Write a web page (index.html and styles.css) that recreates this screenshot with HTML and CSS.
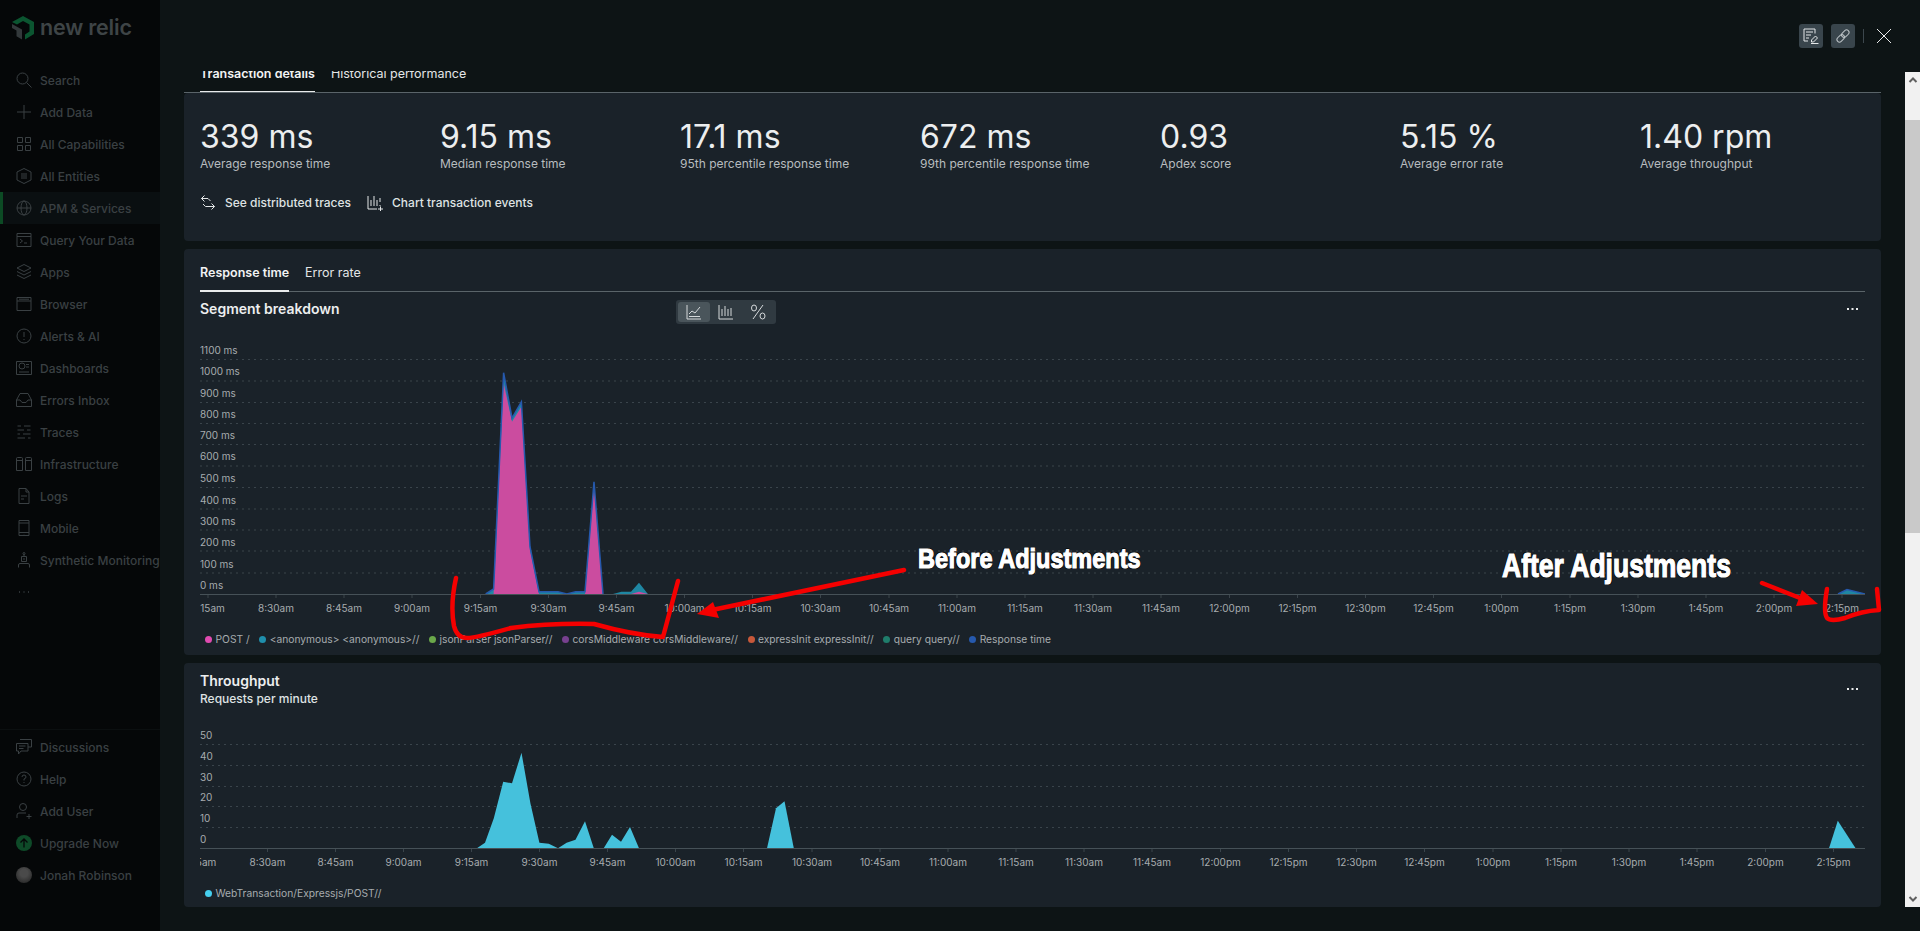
FILE: index.html
```html
<!DOCTYPE html>
<html lang="en">
<head>
    <meta charset="UTF-8">
    <meta name="viewport" content="width=device-width, initial-scale=1.0">
    <title>Transaction details - New Relic</title>
    <link rel="stylesheet" href="styles.css">
</head>
<body>
    <nav class="sidebar">
        <div class="logo">
            <svg class="logo-mark" width="22" height="24" viewBox="0 0 22 24">
                <path fill="#0b5530" d="M11 0 22 6V18L13 23.500V18.500L17.500 15.500V8.500L11 5 5 8.500 0 6Z"/>
                <path fill="#33393b" d="M0 8 10 13.500V23.500L4.500 20.200V14.500L0 12Z"/>
            </svg>
            <span class="logo-text">new relic</span>
        </div>
        <ul class="nav-list">
            <li class="nav-item"><svg class="nav-icon" viewBox="0 0 16 16"><circle cx="6.500" cy="6.500" r="5.500"/><path d="M10.500 10.500 15.500 15.500"/></svg>Search</li>
            <li class="nav-item"><svg class="nav-icon" viewBox="0 0 16 16"><path d="M8 1V15M1 8H15"/></svg>Add Data</li>
            <li class="nav-item"><svg class="nav-icon" viewBox="0 0 16 16"><path d="M1.500 1.500H6.500V6.500H1.500ZM9.500 1.500H14.500V6.500H9.500ZM1.500 9.500H6.500V14.500H1.500ZM9.500 9.500H14.500V14.500H9.500Z"/></svg>All Capabilities</li>
            <li class="nav-item"><svg class="nav-icon" viewBox="0 0 16 16"><path d="M8 .5 15 4V12L8 15.500 1 12V4ZM5 6H11M5 8H11M5 10H11"/></svg>All Entities</li>
            <li class="nav-item nav-item-active"><svg class="nav-icon" viewBox="0 0 16 16"><circle cx="8" cy="8" r="7"/><ellipse cx="8" cy="8" rx="3" ry="7"/><path d="M1 8H15"/></svg>APM &amp; Services</li>
            <li class="nav-item"><svg class="nav-icon" viewBox="0 0 16 16"><path d="M1 1.500H15V14.500H1ZM1 4.500H15M4 7 6.500 9 4 11M8 11H11"/></svg>Query Your Data</li>
            <li class="nav-item"><svg class="nav-icon" viewBox="0 0 16 16"><path d="M8 .5 15 4 8 7.500 1 4ZM1 7.500 8 11 15 7.500M1 11 8 14.500 15 11"/></svg>Apps</li>
            <li class="nav-item"><svg class="nav-icon" viewBox="0 0 16 16"><path d="M1 1.500H15V14.500H1ZM1 5H15M3 3.200H13" /></svg>Browser</li>
            <li class="nav-item"><svg class="nav-icon" viewBox="0 0 16 16"><circle cx="8" cy="8" r="7"/><path d="M8 4V9M8 11V12"/></svg>Alerts &amp; AI</li>
            <li class="nav-item"><svg class="nav-icon" viewBox="0 0 16 16"><path d="M.5 1.500H15.500V14.500H.5ZM10 4.500H13M10 7H13M3 12H13"/><circle cx="6" cy="6" r="3"/></svg>Dashboards</li>
            <li class="nav-item"><svg class="nav-icon" viewBox="0 0 16 16"><path d="M4 1.500H12L15.500 8V14.500H.5V8ZM.5 8H4L6 10.500H10L12 8H15.500"/></svg>Errors Inbox</li>
            <li class="nav-item"><svg class="nav-icon" viewBox="0 0 16 16"><path d="M1.500 2H5M8 2H14.500M1.500 6H8M11 6H14.500M1.500 10H4M7 10H14.500M1.500 14H9M12 14H14.500"/></svg>Traces</li>
            <li class="nav-item"><svg class="nav-icon" viewBox="0 0 16 16"><path d="M.5 2.500Q.5 1.500 1.500 1.500H5.500Q6.500 1.500 6.500 2.500V14.500H.5ZM9.500 2.500Q9.500 1.500 10.500 1.500H14.500Q15.500 1.500 15.500 2.500V14.500H9.500ZM.5 4.500H6.500M9.500 4.500H15.500"/></svg>Infrastructure</li>
            <li class="nav-item"><svg class="nav-icon" viewBox="0 0 16 16"><path d="M3 .5H10L13 4V15.500H3ZM10 .5V4H13M5 8H11M5 11H8"/></svg>Logs</li>
            <li class="nav-item"><svg class="nav-icon" viewBox="0 0 16 16"><path d="M3 .5H13V15.500H3ZM3 3H13M3 12.500H13M8 14V14.300"/></svg>Mobile</li>
            <li class="nav-item"><svg class="nav-icon" viewBox="0 0 16 16"><path d="M5.500 4.500H10.500V9.500H5.500ZM8 4.500V2M2.500 15.500V13Q2.500 11.500 4 11.500H12Q13.500 11.500 13.500 13V15.500M7 7H9"/><circle cx="8" cy="1.500" r="1"/></svg>Synthetic Monitoring</li>
            <li class="nav-item"><svg class="nav-icon" viewBox="0 0 16 16"><path class="nav-dots" d="M3 8H4M7.500 8H8.500M12 8H13"/></svg></li>
        </ul>
        <ul class="nav-list nav-list-bottom">
            <li class="nav-item"><svg class="nav-icon" viewBox="0 0 16 16"><path d="M.5 4.500H12V12H5L2.500 15V12H.5ZM4 .5H15.500V8H12M3 7H9.500M3 9.500H7.500"/></svg>Discussions</li>
            <li class="nav-item"><svg class="nav-icon" viewBox="0 0 16 16"><circle cx="8" cy="8" r="7"/><path d="M6 6Q6 4 8 4 10 4 10 6 10 7.500 8 8V9.500M8 11V12"/></svg>Help</li>
            <li class="nav-item"><svg class="nav-icon" viewBox="0 0 16 16"><circle cx="7" cy="4" r="3.500"/><path d="M1 15V12Q1 10 3 10H10M10.500 13.500H15.500M13 11V16"/></svg>Add User</li>
            <li class="nav-item"><span class="upgrade-badge"><svg width="10" height="10" viewBox="0 0 10 10"><path d="M5 9.500V1M1.500 4.500 5 1 8.500 4.500"/></svg></span>Upgrade Now</li>
            <li class="nav-item"><span class="avatar"></span>Jonah Robinson</li>
        </ul>
    </nav>

    <main class="main">
        <header class="topbar">
            <button class="icon-btn" aria-label="Notes">
                <svg width="16" height="16" viewBox="0 0 16 16"><path d="M12 5.500V1H1V13H5M3 4H10M3 7H8M3 10H6M8 15.500H15.500M8.500 12 12.500 8 14.500 10 10.500 14H8.500Z"/></svg>
            </button>
            <button class="icon-btn icon-btn-dim" aria-label="Copy link">
                <svg width="16" height="16" viewBox="0 0 16 16"><g transform="rotate(-45 8 8)"><rect x="0.500" y="5.500" width="8.500" height="5" rx="2.500"/><rect x="7" y="5.500" width="8.500" height="5" rx="2.500"/></g></svg>
            </button>
            <span class="topbar-divider"></span>
            <button class="close-btn" aria-label="Close">
                <svg width="16" height="16" viewBox="0 0 16 16"><path d="M1 1 15 15M15 1 1 15"/></svg>
            </button>
        </header>

        <div class="scroll-row">
            <div class="content">
                <div class="tabs tabs-clipped">
                    <span class="tab tab-active">Transaction details</span>
                    <span class="tab">Historical performance</span>
                </div>

                <section class="panel panel-stats">
                    <div class="stats">
                        <div><div class="stat-value">339 ms</div><div class="stat-label">Average response time</div></div>
                        <div><div class="stat-value">9.15 ms</div><div class="stat-label">Median response time</div></div>
                        <div><div class="stat-value">17.1 ms</div><div class="stat-label">95th percentile response time</div></div>
                        <div><div class="stat-value">672 ms</div><div class="stat-label">99th percentile response time</div></div>
                        <div><div class="stat-value">0.93</div><div class="stat-label">Apdex score</div></div>
                        <div><div class="stat-value">5.15 %</div><div class="stat-label">Average error rate</div></div>
                        <div><div class="stat-value">1.40 rpm</div><div class="stat-label">Average throughput</div></div>
                    </div>
                    <div class="actions">
                        <a class="action">
                            <svg width="16" height="16" viewBox="0 0 16 16"><path d="M4.500 .5 1.500 3.500 4.500 6.500M1.500 3.500H8L10.500 6M3 9 5.500 11.500H14.500M11.500 8.500 14.500 11.500 11.500 14.500"/></svg>
                            See distributed traces
                        </a>
                        <a class="action">
                            <svg width="16" height="16" viewBox="0 0 16 16"><path d="M1 1V14H10M4 11V5M7 11V1M10 11V5M13 7V3M13 11V10M11 14H16M13.500 11.500V16"/></svg>
                            Chart transaction events
                        </a>
                    </div>
                </section>

                <section class="panel panel-response">
                    <div class="tabs tabs-inner">
                        <span class="tab tab-active">Response time</span>
                        <span class="tab">Error rate</span>
                    </div>
                    <div class="chart-head">
                        <h2 class="chart-title">Segment breakdown</h2>
                        <div class="chart-toggle">
                            <span class="toggle-btn toggle-btn-active"><svg width="16" height="16" viewBox="0 0 16 16"><path d="M1 1V15H15M3 10 6 7 9 9 14 3M3 12.500H14"/></svg></span>
                            <span class="toggle-btn"><svg width="16" height="16" viewBox="0 0 16 16"><path d="M1 1V15H15M4 12V5M7 12V2M10 12V5M13 12V4"/></svg></span>
                            <span class="toggle-btn"><svg width="16" height="16" viewBox="0 0 16 16"><path d="M13 1 3 15"/><ellipse cx="4" cy="4" rx="2.500" ry="3"/><ellipse cx="12.500" cy="12" rx="2.500" ry="3"/></svg></span>
                        </div>
                        <svg class="more" width="11" height="18" viewBox="0 0 11 18"><path d="M0 8H2V10H0ZM4.500 8H6.500V10H4.500ZM9 8H11V10H9Z"/></svg>
                    </div>

                    <svg class="chart chart-response" viewBox="200 326 1665 300" width="1665" height="300">
                        <g class="grid">
                            <path d="M200 359.500H1865M200 381H1865M200 402.500H1865M200 423.500H1865M200 444.500H1865M200 466H1865M200 487.500H1865M200 509H1865M200 530H1865M200 551H1865M200 573H1865"/>
                        </g>
                        <g class="y-labels">
                            <text x="200" y="354">1100 ms</text>
                            <text x="200" y="375">1000 ms</text>
                            <text x="200" y="397">900 ms</text>
                            <text x="200" y="418">800 ms</text>
                            <text x="200" y="439">700 ms</text>
                            <text x="200" y="460">600 ms</text>
                            <text x="200" y="482">500 ms</text>
                            <text x="200" y="504">400 ms</text>
                            <text x="200" y="525">300 ms</text>
                            <text x="200" y="546">200 ms</text>
                            <text x="200" y="568">100 ms</text>
                            <text x="200" y="589">0 ms</text>
                        </g>
                        <polygon class="area-teal" points="485.700,594 493.600,589 503.600,372.700 512,418 521.400,401.700 530,546.700 539,591.700 558,591.700 566.800,594 575.700,591.700 585,591.700 594,481.700 603,594"/>
                        <polygon class="area-teal" points="613,594 621.400,591.700 631,591.700 639,582.700 647.900,594"/>
                        <polygon class="area-pink" points="493.600,594 503.600,383 512,421.700 521.400,406.700 530,550 539,594"/>
                        <polygon class="area-pink" points="585,594 594,486.700 603,594"/>
                        <polygon class="area-pink" points="631,594 639,591.700 647.900,594"/>
                        <polyline class="line-blue" points="485.700,594 493.600,589 503.600,372.700 512,418 521.400,401.700 530,546.700 539,591.700 558,591.700 566.800,594 575.700,591.700 585,591.700 594,481.700 603,594"/>
                        <polygon class="area-teal" points="1838,594 1847,589.500 1865,594"/>
                        <polyline class="line-blue" points="1838,594 1847,589.500 1865,594"/>
                        <path class="axis" d="M200 594.500H1865"/>
                        <path class="ticks" d="M208 595V598M276 595V598M344 595V598M412 595V598M480.500 595V598M548.500 595V598M616.500 595V598M684.500 595V598M752.500 595V598M820.500 595V598M889 595V598M957 595V598M1025 595V598M1093 595V598M1161 595V598M1229.500 595V598M1297.500 595V598M1365.500 595V598M1433.500 595V598M1501.500 595V598M1570 595V598M1638 595V598M1706 595V598M1774 595V598M1842 595V598"/>
                        <g class="x-labels">
                            <text x="208" y="612">8:15am</text>
                            <text x="276" y="612">8:30am</text>
                            <text x="344" y="612">8:45am</text>
                            <text x="412" y="612">9:00am</text>
                            <text x="480.500" y="612">9:15am</text>
                            <text x="548.500" y="612">9:30am</text>
                            <text x="616.500" y="612">9:45am</text>
                            <text x="684.500" y="612">10:00am</text>
                            <text x="752.500" y="612">10:15am</text>
                            <text x="820.500" y="612">10:30am</text>
                            <text x="889" y="612">10:45am</text>
                            <text x="957" y="612">11:00am</text>
                            <text x="1025" y="612">11:15am</text>
                            <text x="1093" y="612">11:30am</text>
                            <text x="1161" y="612">11:45am</text>
                            <text x="1229.500" y="612">12:00pm</text>
                            <text x="1297.500" y="612">12:15pm</text>
                            <text x="1365.500" y="612">12:30pm</text>
                            <text x="1433.500" y="612">12:45pm</text>
                            <text x="1501.500" y="612">1:00pm</text>
                            <text x="1570" y="612">1:15pm</text>
                            <text x="1638" y="612">1:30pm</text>
                            <text x="1706" y="612">1:45pm</text>
                            <text x="1774" y="612">2:00pm</text>
                            <text x="1842" y="612">2:15pm</text>
                        </g>
                    </svg>

                    <ul class="legend">
                        <li class="legend-item"><span class="dot dot-pink"></span>POST /</li>
                        <li class="legend-item"><span class="dot dot-teal"></span>&lt;anonymous&gt; &lt;anonymous&gt;//</li>
                        <li class="legend-item"><span class="dot dot-green"></span>jsonParser jsonParser//</li>
                        <li class="legend-item"><span class="dot dot-purple"></span>corsMiddleware corsMiddleware//</li>
                        <li class="legend-item"><span class="dot dot-orange"></span>expressInit expressInit//</li>
                        <li class="legend-item"><span class="dot dot-seagreen"></span>query query//</li>
                        <li class="legend-item"><span class="dot dot-blue"></span>Response time</li>
                    </ul>
                </section>

                <section class="panel panel-throughput">
                    <div class="chart-head chart-head-plain">
                        <div>
                            <h2 class="chart-title">Throughput</h2>
                            <p class="chart-subtitle">Requests per minute</p>
                        </div>
                        <svg class="more" width="11" height="18" viewBox="0 0 11 18"><path d="M0 8H2V10H0ZM4.500 8H6.500V10H4.500ZM9 8H11V10H9Z"/></svg>
                    </div>

                    <svg class="chart chart-throughput" viewBox="200 708 1665 170" width="1665" height="170">
                        <g class="grid">
                            <path d="M200 744.500H1865M200 765.500H1865M200 786.500H1865M200 806.500H1865M200 827.500H1865"/>
                        </g>
                        <g class="y-labels">
                            <text x="200" y="739">50</text>
                            <text x="200" y="760">40</text>
                            <text x="200" y="781">30</text>
                            <text x="200" y="801">20</text>
                            <text x="200" y="822">10</text>
                            <text x="200" y="843">0</text>
                        </g>
                        <polygon class="area-cyan" points="476.900,848.300 485,842.700 493.800,818.300 503.200,781.700 512,783.300 521.500,752.700 530.400,803.300 539.400,842.700 548.800,843.700 558,848.300 566.600,842.700 575.500,839.700 585,821.300 593.800,848.300"/>
                        <polygon class="area-cyan" points="603.700,848.300 612,834.700 621,841.700 630,827 639,848.300"/>
                        <polygon class="area-cyan" points="767,848.300 776,808.300 784.500,801.300 793.800,848.300"/>
                        <polygon class="area-cyan" points="1829,848.300 1837.800,820.700 1855.600,848.300"/>
                        <path class="axis" d="M200 848.500H1865"/>
                        <path class="ticks" d="M199.500 849V852M267.500 849V852M335.500 849V852M403.500 849V852M471.500 849V852M539.500 849V852M607.500 849V852M675.500 849V852M743.500 849V852M812 849V852M880 849V852M948 849V852M1016 849V852M1084 849V852M1152 849V852M1220.500 849V852M1288.500 849V852M1356.500 849V852M1424.500 849V852M1493 849V852M1561 849V852M1629 849V852M1697 849V852M1765.500 849V852M1833.500 849V852"/>
                        <g class="x-labels">
                            <text x="199.500" y="866">8:15am</text>
                            <text x="267.500" y="866">8:30am</text>
                            <text x="335.500" y="866">8:45am</text>
                            <text x="403.500" y="866">9:00am</text>
                            <text x="471.500" y="866">9:15am</text>
                            <text x="539.500" y="866">9:30am</text>
                            <text x="607.500" y="866">9:45am</text>
                            <text x="675.500" y="866">10:00am</text>
                            <text x="743.500" y="866">10:15am</text>
                            <text x="812" y="866">10:30am</text>
                            <text x="880" y="866">10:45am</text>
                            <text x="948" y="866">11:00am</text>
                            <text x="1016" y="866">11:15am</text>
                            <text x="1084" y="866">11:30am</text>
                            <text x="1152" y="866">11:45am</text>
                            <text x="1220.500" y="866">12:00pm</text>
                            <text x="1288.500" y="866">12:15pm</text>
                            <text x="1356.500" y="866">12:30pm</text>
                            <text x="1424.500" y="866">12:45pm</text>
                            <text x="1493" y="866">1:00pm</text>
                            <text x="1561" y="866">1:15pm</text>
                            <text x="1629" y="866">1:30pm</text>
                            <text x="1697" y="866">1:45pm</text>
                            <text x="1765.500" y="866">2:00pm</text>
                            <text x="1833.500" y="866">2:15pm</text>
                        </g>
                    </svg>

                    <ul class="legend legend-last">
                        <li class="legend-item"><span class="dot dot-cyan"></span>WebTransaction/Expressjs/POST//</li>
                    </ul>
                </section>
            </div>

            <div class="scrollbar">
                <span class="scroll-btn">
                    <svg width="10" height="10" viewBox="0 0 10 10"><path d="M1.500 7 5 3.500 8.500 7"/></svg>
                </span>
                <span class="scroll-thumb"></span>
                <span class="scroll-track"></span>
                <span class="scroll-btn scroll-btn-bottom">
                    <svg width="10" height="10" viewBox="0 0 10 10"><path d="M1.500 3 5 6.500 8.500 3"/></svg>
                </span>
            </div>
        </div>
    </main>

    <!-- red marks drawn on top of the screenshot -->
    <svg class="marks" viewBox="0 0 1920 931" width="1920" height="931">
        <path d="M456 578Q450 605 454 626 457 638 467 638 476 638 511 628 551 623 594 624 633 635 663 637L678 581"/>
        <path d="M904 570 712 610"/>
        <polygon points="697,614 713,602 719,618"/>
        <path d="M1827 589Q1823 612 1827 618 1831 622 1845 618 1862 611 1879 610L1877 589"/>
        <path d="M1762 583 1800 598"/>
        <polygon points="1818,604 1802,590 1796,606"/>
    </svg>
    <span class="mark-text mark-before">Before Adjustments</span>
    <span class="mark-text mark-after">After Adjustments</span>
</body>
</html>
```

FILE: styles.css
```css
* {
    box-sizing: border-box;
}
html, body {
    margin: 0;
    height: 931px;
    overflow: hidden;
}
body {
    display: flex;
    position: relative;
    font-family: Inter, "Liberation Sans", sans-serif;
    font-size: 12px;
    background-color: #0d1415;
    color: #e8eaeb;
}
ul {
    list-style: none;
    margin: 0;
    padding: 0;
}

/* sidebar, dimmed by the modal */
.sidebar {
    width: 160px;
    flex-shrink: 0;
    height: 931px;
    display: flex;
    flex-direction: column;
    padding-bottom: 40px;
    background-color: #050708;
    color: #3a4043;
}
.logo {
    height: 64px;
    padding: 16px 0 0 12px;
    display: flex;
    align-items: flex-start;
    gap: 6px;
}
.logo-mark {
    flex-shrink: 0;
}
.logo-text {
    font-size: 21.500px;
    font-weight: 600;
    line-height: 23px;
    letter-spacing: -0.2px;
    color: #3e4446;
}
.nav-item {
    height: 32px;
    display: flex;
    align-items: center;
    gap: 8px;
    padding-left: 16px;
    font-weight: 500;
    white-space: nowrap;
}
.nav-item-active {
    padding-left: 13px;
    border-left: 3px solid #0c4a24;
    background-color: #0a0f11;
}
.nav-icon {
    width: 16px;
    height: 16px;
    flex-shrink: 0;
    fill: none;
    stroke: #3a4043;
    stroke-width: 1;
}
.nav-dots {
    stroke-width: 1.500;
}
.nav-list-bottom {
    margin-top: auto;
    padding-top: 1px;
    border-top: 1px solid #0b0f10;
}
.upgrade-badge {
    width: 16px;
    height: 16px;
    border-radius: 50%;
    background-color: #0e4a28;
    display: flex;
    align-items: center;
    justify-content: center;
    flex-shrink: 0;
}
.upgrade-badge svg {
    fill: none;
    stroke: #050708;
    stroke-width: 1.300;
}
.avatar {
    width: 16px;
    height: 16px;
    border-radius: 50%;
    background: radial-gradient(circle at 50% 38%, #4a4a4a 30%, #2e2e2e 75%);
    flex-shrink: 0;
}

/* main column */
.main {
    flex: 1;
    display: flex;
    flex-direction: column;
    min-width: 0;
}
.topbar {
    height: 71px;
    padding: 24px 24px 0 0;
    display: flex;
    justify-content: flex-end;
    align-items: flex-start;
    gap: 8px;
}
.icon-btn {
    width: 24px;
    height: 24px;
    padding: 0;
    border: none;
    border-radius: 3px;
    background-color: #39454c;
    display: flex;
    align-items: center;
    justify-content: center;
}
.icon-btn svg {
    fill: none;
    stroke: #e4e7e8;
    stroke-width: 1;
}
.icon-btn-dim svg {
    stroke: #bcc3c6;
}
.topbar-divider {
    width: 1px;
    height: 14px;
    margin-top: 5px;
    background-color: #3c474d;
}
.close-btn {
    width: 24px;
    height: 24px;
    padding: 0;
    border: none;
    background: none;
    display: flex;
    align-items: center;
    justify-content: center;
}
.close-btn svg {
    fill: none;
    stroke: #e8eaeb;
    stroke-width: 1;
}
.scroll-row {
    height: 836px;
    display: flex;
}
.content {
    width: 1697px;
    margin-left: 24px;
    display: flex;
    flex-direction: column;
    overflow: hidden;
}

/* tabs */
.tabs {
    display: flex;
    gap: 16px;
    border-bottom: 1px solid #5a6469;
}
.tab {
    display: block;
    font-size: 12.500px;
    font-weight: 400;
    color: #e3e6e7;
    border-bottom: 2px solid transparent;
    margin-bottom: -1px;
    white-space: nowrap;
}
.tab-active {
    font-weight: 600;
    color: #f2f3f4;
    border-bottom-color: #e9ebec;
}
.tabs-clipped {
    height: 22px;
    padding-left: 16px;
    overflow: hidden;
    align-items: flex-end;
}
.tabs-clipped .tab {
    height: 27px;
    line-height: 16px;
}
.tabs-inner {
    height: 43px;
    align-items: flex-end;
}
.tabs-inner .tab {
    height: 28px;
    line-height: 18px;
}

/* panels */
.panel {
    flex-shrink: 0;
    background-color: #1a2229;
    border-radius: 4px;
    padding: 0 16px;
}
.panel-stats {
    height: 148px;
    padding-top: 24px;
    margin-bottom: 8px;
}
.panel-response {
    height: 406px;
    margin-bottom: 8px;
}
.panel-throughput {
    height: 244px;
    padding-top: 9px;
}
.stats {
    display: grid;
    grid-template-columns: repeat(7, 240px);
}
.stat-value {
    font-size: 32px;
    line-height: 39px;
    font-weight: 400;
    color: #eceeef;
}
.stat-label {
    font-size: 12px;
    line-height: 16px;
    color: #b7bcbf;
}
.actions {
    display: flex;
    gap: 16px;
    margin-top: 21px;
}
.action {
    display: flex;
    align-items: center;
    gap: 9px;
    font-size: 12px;
    line-height: 20px;
    font-weight: 500;
    color: #dfe2e3;
}
.action svg {
    fill: none;
    stroke: #e4e7e8;
    stroke-width: 1;
    flex-shrink: 0;
}

/* chart headers */
.chart-head {
    height: 34px;
    padding-top: 8px;
    display: grid;
    grid-template-columns: 476px auto 1fr;
    align-items: start;
}
.chart-head-plain {
    height: 36px;
    padding-top: 0;
    grid-template-columns: 1fr auto;
    align-items: center;
}
.chart-head-plain .more {
    margin-top: -2px;
}
.chart-title {
    margin: 0;
    font-size: 14px;
    line-height: 18px;
    font-weight: 600;
    color: #eceeef;
}
.chart-subtitle {
    margin: 0;
    font-size: 12px;
    line-height: 18px;
    font-weight: 500;
    color: #dfe2e3;
}
.chart-toggle {
    width: 100px;
    height: 24px;
    padding: 2px;
    display: flex;
    border-radius: 3px;
    background-color: #303a41;
}
.toggle-btn {
    width: 32px;
    height: 20px;
    border-radius: 3px;
    display: flex;
    align-items: center;
    justify-content: center;
}
.toggle-btn svg {
    fill: none;
    stroke: #d5d9db;
    stroke-width: 1;
}
.toggle-btn-active {
    background-color: #4a555b;
}
.more {
    justify-self: end;
    margin-right: 7px;
    fill: #e8eaeb;
}

/* charts */
.chart {
    display: block;
    overflow: hidden;
}
.grid path {
    fill: none;
    stroke: #3a444b;
    stroke-width: 1;
    stroke-dasharray: 2 4;
}
.axis {
    fill: none;
    stroke: #465157;
    stroke-width: 1;
}
.ticks {
    fill: none;
    stroke: #3a444b;
    stroke-width: 1;
}
.y-labels text,
.x-labels text {
    font-size: 10px;
    fill: #a7acaf;
}
.x-labels text {
    text-anchor: middle;
}
.area-teal {
    fill: #1f87a3;
}
.area-pink {
    fill: #cb4c9f;
}
.area-cyan {
    fill: #45c1dc;
}
.line-blue {
    fill: none;
    stroke: #2659ad;
    stroke-width: 1.500;
}

/* legend */
.legend {
    height: 26px;
    padding-left: 5px;
    display: flex;
    align-items: center;
    gap: 9.500px;
}
.legend-last {
    margin-top: 2px;
}
.legend-item {
    display: flex;
    align-items: center;
    gap: 3.500px;
    font-size: 10.250px;
    color: #a7acaf;
    white-space: nowrap;
}
.dot {
    width: 7px;
    height: 7px;
    border-radius: 50%;
    flex-shrink: 0;
}
.dot-pink { background-color: #e04bb0; }
.dot-teal { background-color: #1f8fac; }
.dot-green { background-color: #6aa84a; }
.dot-purple { background-color: #77408f; }
.dot-orange { background-color: #c7583a; }
.dot-seagreen { background-color: #1f7d6b; }
.dot-blue { background-color: #2659ad; }
.dot-cyan { background-color: #45cfee; }

/* fake browser scrollbar of the modal */
.scrollbar {
    width: 15px;
    margin: 1px 0 0 24px;
    display: flex;
    flex-direction: column;
    background-color: #f1f1f1;
}
.scroll-btn {
    height: 48px;
    flex-shrink: 0;
    display: block;
    padding: 3px 0 0 2.500px;
}
.scroll-btn svg {
    display: block;
    fill: none;
    stroke: #606060;
    stroke-width: 2;
}
.scroll-thumb {
    height: 413px;
    flex-shrink: 0;
    background-color: #c9c9c9;
}
.scroll-track {
    flex: 1;
}
.scroll-btn-bottom {
    height: 15px;
    padding-top: 2px;
}

/* annotations over the screenshot */
.marks {
    position: absolute;
    top: 0;
    left: 0;
    pointer-events: none;
}
.marks path {
    fill: none;
    stroke: #f50000;
    stroke-width: 4.500;
    stroke-linecap: round;
    stroke-linejoin: round;
}
.marks polygon {
    fill: #f50000;
}
.mark-text {
    position: absolute;
    font-family: "Liberation Sans", sans-serif;
    font-weight: 700;
    color: #fff;
    -webkit-text-stroke: 1.200px #fff;
    text-shadow: 1px 1px 0 #000, -1px -1px 0 #000, 1px -1px 0 #000, -1px 1px 0 #000;
    white-space: nowrap;
    transform-origin: left center;
}
.mark-before {
    left: 918px;
    top: 544px;
    font-size: 28px;
    line-height: 30px;
    transform: scaleX(0.84);
}
.mark-after {
    left: 1502px;
    top: 547px;
    font-size: 34px;
    line-height: 36px;
    transform: scaleX(0.78);
}
```
